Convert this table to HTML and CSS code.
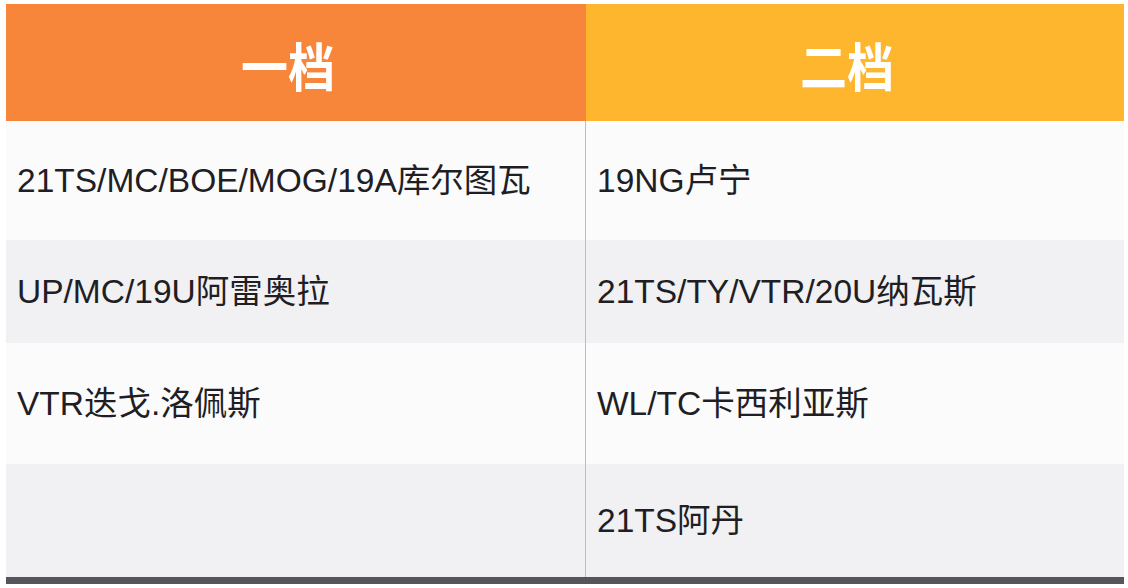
FILE: index.html
```html
<!DOCTYPE html>
<html lang="zh-CN">
<head>
<meta charset="utf-8">
<title>档位表</title>
<link rel="stylesheet" href="styles.css">
</head>
<body>
<div class="table">
  <div class="head head-1"><span class="head-text">一档</span></div>
  <div class="head head-2"><span class="head-text">二档</span></div>

  <div class="cell left odd r1">21TS/MC/BOE/MOG/19A库尔图瓦</div>
  <div class="cell odd r1">19NG卢宁</div>

  <div class="cell left even r2">UP/MC/19U阿雷奥拉</div>
  <div class="cell even r2">21TS/TY/VTR/20U纳瓦斯</div>

  <div class="cell left odd r3">VTR迭戈.洛佩斯</div>
  <div class="cell odd r3">WL/TC卡西利亚斯</div>

  <div class="cell left even r4"></div>
  <div class="cell even r4">21TS阿丹</div>

  <div class="foot"></div>
</div>
</body>
</html>
```

FILE: styles.css
```css
html, body {
  margin: 0;
  padding: 0;
  background: #ffffff;
}

body {
  font-family: "Liberation Sans", "Noto Sans CJK SC", sans-serif;
  color: #1f1e24;
}

.table {
  display: grid;
  grid-template-columns: 580px 538px;
  margin: 4px 0 0 6px;
  width: 1118px;
}

.head {
  height: 117px;
  display: flex;
  align-items: center;
  justify-content: center;
  color: #ffffff;
  font-family: "Noto Sans CJK SC", sans-serif;
  font-weight: 700;
  font-size: 47px;
  padding: 4px 16px 0 0;
  box-sizing: border-box;
}

.head-text {
  display: inline-block;
  transform: scaleY(1.12);
}

.head-1 {
  background: #f8863a;
}

.head-2 {
  background: #fdb62e;
}

.cell {
  display: flex;
  align-items: center;
  padding: 0 0 6px 11px;
  font-size: 33.5px;
  box-sizing: border-box;
  white-space: nowrap;
}

.left {
  border-right: 1px solid #bdbcbf;
}

.odd {
  background: #fbfbfc;
}

.even {
  background: #f1f0f2;
}

.r1 { height: 119px; }
.r2 { height: 103px; }
.r3 { height: 121px; }
.r4 { height: 113px; }

.foot {
  grid-column: 1 / 3;
  height: 7px;
  background: #57555b;
}
```
